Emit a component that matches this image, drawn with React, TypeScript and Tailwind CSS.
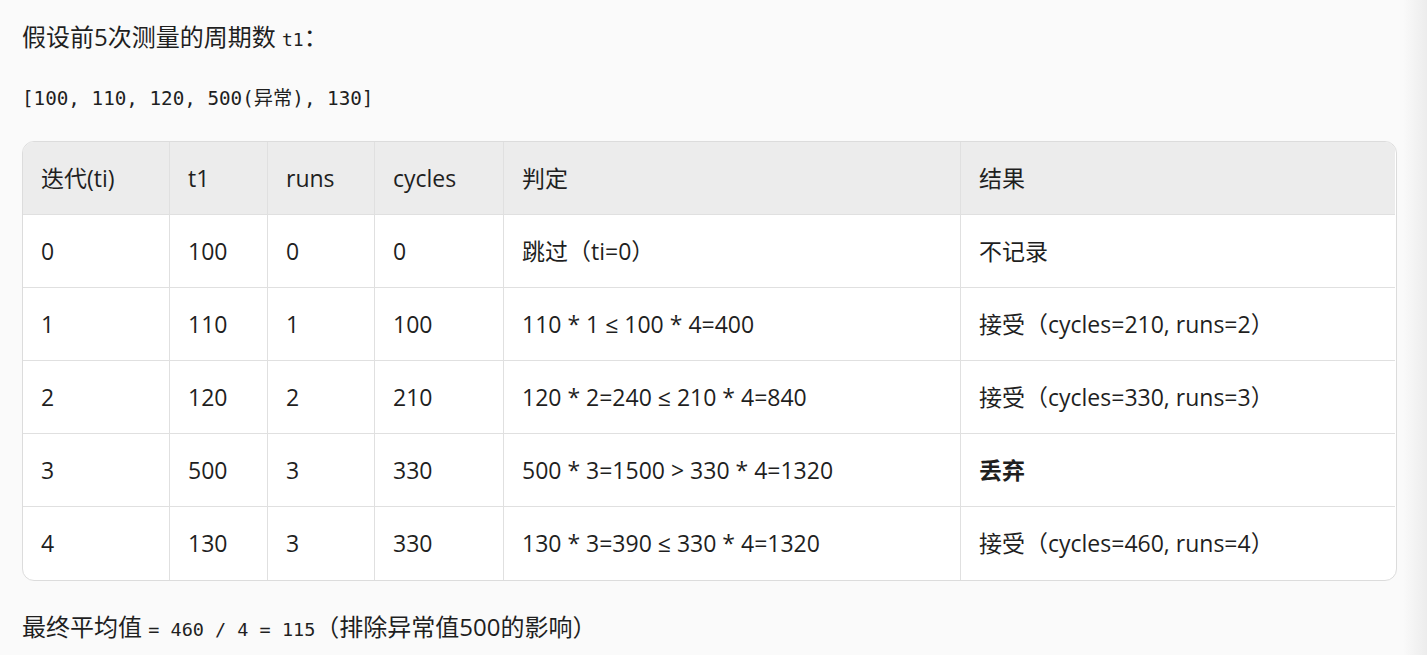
const rows: { ti: string; t1: string; runs: string; cycles: string; check: string; result: string; bold?: boolean }[] = [
  { ti: "0", t1: "100", runs: "0", cycles: "0", check: "跳过（ti=0）", result: "不记录" },
  { ti: "1", t1: "110", runs: "1", cycles: "100", check: "110 * 1 ≤ 100 * 4=400", result: "接受（cycles=210, runs=2）" },
  { ti: "2", t1: "120", runs: "2", cycles: "210", check: "120 * 2=240 ≤ 210 * 4=840", result: "接受（cycles=330, runs=3）" },
  { ti: "3", t1: "500", runs: "3", cycles: "330", check: "500 * 3=1500 > 330 * 4=1320", result: "丢弃", bold: true },
  { ti: "4", t1: "130", runs: "3", cycles: "330", check: "130 * 3=390 ≤ 330 * 4=1320", result: "接受（cycles=460, runs=4）" },
];

const cell = "h-[73px] px-[18px] border-l border-t border-[#e0e0e0] align-middle text-left font-normal";
const mono = "font-['DejaVu_Sans_Mono','Noto_Sans_CJK_SC',monospace]";

export default function App() {
  return (
    <div className="min-h-[655px] w-full bg-[linear-gradient(to_right,#fafafa_calc(100%-24px),#ececec)] text-[#1f1f1f] font-['Open_Sans','Noto_Sans_CJK_SC',sans-serif] text-[23px]">
      <div className="w-[1375px] ml-[22px] pt-[19px]">
        <p className="leading-[36px] text-[24px]">
          假设前5次测量的周期数 <code className={mono + " text-[18px]"}>t1</code>：
        </p>
        <pre className={mono + " mt-[26px] leading-[30px] text-[19.25px]"}>[100, 110, 120, 500(异常), 130]</pre>

        <div className="mt-[27px] rounded-xl border border-[#dcdcdc] overflow-hidden bg-white">
          <table className="w-full border-collapse -ml-px -mt-px table-fixed">
            <colgroup>
              <col className="w-[147px]" />
              <col className="w-[98px]" />
              <col className="w-[107px]" />
              <col className="w-[129px]" />
              <col className="w-[457px]" />
              <col />
            </colgroup>
            <thead>
              <tr className="bg-[#ececec]">
                {["迭代(ti)", "t1", "runs", "cycles", "判定", "结果"].map((h) => (
                  <th key={h} className={cell}>
                    {h}
                  </th>
                ))}
              </tr>
            </thead>
            <tbody>
              {rows.map((r) => (
                <tr key={r.ti}>
                  <td className={cell}>{r.ti}</td>
                  <td className={cell}>{r.t1}</td>
                  <td className={cell}>{r.runs}</td>
                  <td className={cell}>{r.cycles}</td>
                  <td className={cell}>{r.check}</td>
                  <td className={cell + (r.bold ? " !font-bold" : "")}>{r.result}</td>
                </tr>
              ))}
            </tbody>
          </table>
        </div>

        <p className="mt-[28px] leading-[36px] text-[24px]">
          最终平均值 <code className={mono + " text-[18.5px]"}>= 460 / 4 = 115</code>（排除异常值500的影响）
        </p>
      </div>
    </div>
  );
}
